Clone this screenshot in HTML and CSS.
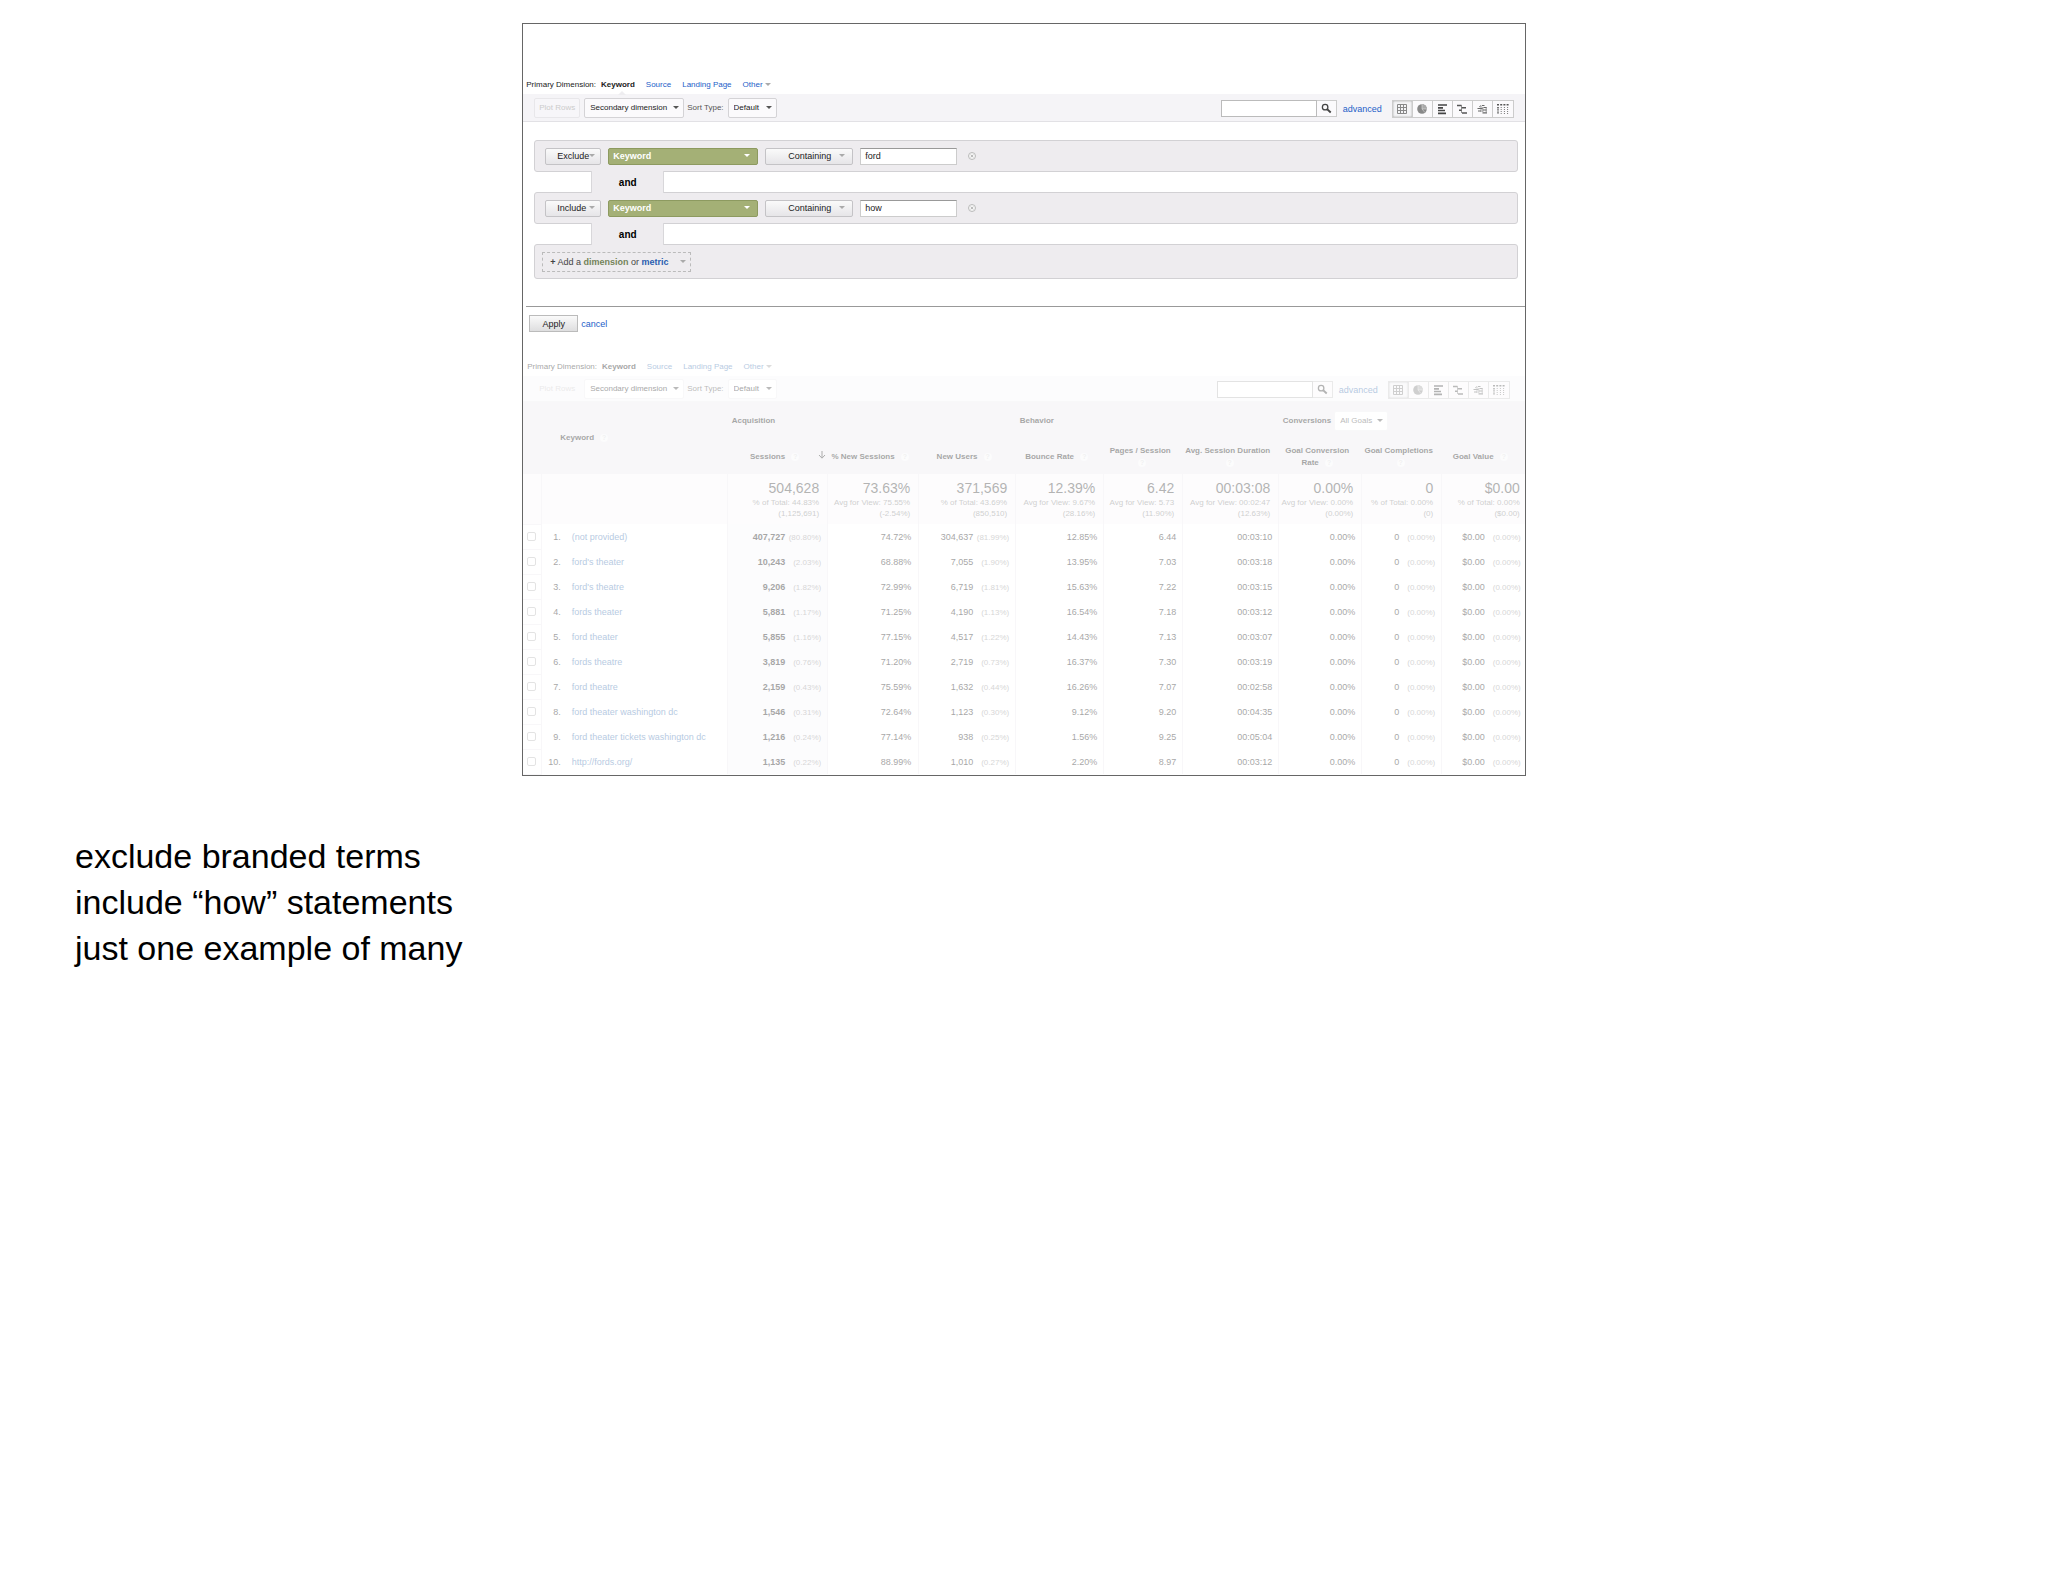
FILE: index.html
```html
<!DOCTYPE html>
<html lang="en">
<head>
  <meta charset="UTF-8">
  <meta name="viewport" content="width=device-width, initial-scale=1.0">
  <title>Keyword filters</title>
  <link rel="stylesheet" href="styles.css">
</head>
<body>

  <!-- shared icons -->
  <svg class="sprite" aria-hidden="true">
    <symbol id="i-search" viewBox="0 0 12 12"><circle cx="4.5" cy="4.5" r="3" fill="none" stroke="#444" stroke-width="1.4"/><path d="M6.8 6.8L10.6 10.4" stroke="#444" stroke-width="2"/></symbol>
    <symbol id="i-table" viewBox="0 0 12 12"><path d="M1.5 1.5h9v9h-9zM1.5 4.5h9M1.5 7.5h9M4.5 1.5v9M7.5 1.5v9" fill="none" stroke="#888"/></symbol>
    <symbol id="i-pie" viewBox="0 0 12 12"><circle cx="6" cy="6" r="4.8" fill="#888"/><path d="M6 6V1.2A4.8 4.8 0 0 1 10.8 6z" fill="#aaa"/><path d="M6 1.2V6h4.8M6 6l3 3.6" fill="none" stroke="#ddd" stroke-width=".6"/></symbol>
    <symbol id="i-bars" viewBox="0 0 12 12"><path d="M2 2h9M2 4.8h5M2 7.5h7M2 10.3h8" stroke="#444" stroke-width="1.7"/></symbol>
    <symbol id="i-compare" viewBox="0 0 12 12"><path d="M1 2.5h4.5M5.5 4.7h4.5M3 7.3h3M6 10h5" stroke="#555" stroke-width="1.5"/><path d="M5.5 2v8" stroke="#777" stroke-width=".8"/></symbol>
    <symbol id="i-cloud" viewBox="0 0 12 12"><path d="M1.5 5.5h5M2 8h3M6.5 9.8h4.5M6 2.5h2.5M7.5 4.5h3M7 7h3.5" stroke="#666" stroke-width="1.2"/><path d="M3 4l2-1.5v6.5M6.8 4v5M10.2 4v5" fill="none" stroke="#777" stroke-width=".8"/></symbol>
    <symbol id="i-pivot" viewBox="0 0 12 12"><path d="M0 1.8h12" stroke="#555" stroke-width="1.6" stroke-dasharray="2 1.2"/><path d="M1 4v7" stroke="#555" stroke-width="1.6" stroke-dasharray="1.4 .8"/><path d="M4.2 4v7M7.4 4v7M10.6 4v7" stroke="#777" stroke-dasharray="1 1"/></symbol>
    <symbol id="i-remove" viewBox="0 0 10 10"><circle cx="5" cy="5" r="3.5" fill="#f4f4f4" stroke="#bbb"/><path d="M3.7 3.7l2.6 2.6M6.3 3.7L3.7 6.3" stroke="#bbb"/></symbol>
    <symbol id="i-down" viewBox="0 0 10 10"><path d="M5 1v7M2 5l3 3.2L8 5" fill="none" stroke="#333"/></symbol>
  </svg>

  <main class="slide">
    <section class="filters">
      <nav class="dimensions">
        <span>Primary Dimension:</span>
        <strong class="current">Keyword</strong>
        <a href="#source">Source</a>
        <a href="#landing">Landing Page</a>
        <a href="#other">Other <i class="caret light"></i></a>
      </nav>

      <form class="toolbar">
        <button type="button" class="plot" disabled>Plot Rows</button>
        <span class="dropdown secondary"><select aria-label="Secondary dimension"><option>Secondary dimension</option></select></span>
        <label for="sort">Sort Type:</label>
        <span class="dropdown sort"><select id="sort"><option>Default</option></select></span>
        <div class="search">
          <input type="text" aria-label="Search">
          <button type="button" aria-label="Search"><svg><use href="#i-search"/></svg></button>
        </div>
        <a href="#advanced" class="advanced">advanced</a>
        <div class="views">
          <button type="button" class="on" aria-label="Table"><svg><use href="#i-table"/></svg></button>
          <button type="button" aria-label="Percentage"><svg><use href="#i-pie"/></svg></button>
          <button type="button" aria-label="Performance"><svg><use href="#i-bars"/></svg></button>
          <button type="button" aria-label="Comparison"><svg><use href="#i-compare"/></svg></button>
          <button type="button" aria-label="Term cloud"><svg><use href="#i-cloud"/></svg></button>
          <button type="button" aria-label="Pivot"><svg><use href="#i-pivot"/></svg></button>
        </div>
      </form>

      <form class="builder">
        <div class="rule">
          <span class="dropdown mode"><select aria-label="Mode"><option>Exclude</option></select></span>
          <span class="dropdown field"><select aria-label="Dimension"><option>Keyword</option></select></span>
          <span class="dropdown match"><select aria-label="Match"><option>Containing</option></select></span>
          <input type="text" value="ford" aria-label="Value">
          <button type="button" class="remove" aria-label="Remove"><svg><use href="#i-remove"/></svg></button>
        </div>
        <div class="joiner"><span>and</span></div>
        <div class="rule">
          <span class="dropdown mode"><select aria-label="Mode"><option>Include</option></select></span>
          <span class="dropdown field"><select aria-label="Dimension"><option>Keyword</option></select></span>
          <span class="dropdown match"><select aria-label="Match"><option>Containing</option></select></span>
          <input type="text" value="how" aria-label="Value">
          <button type="button" class="remove" aria-label="Remove"><svg><use href="#i-remove"/></svg></button>
        </div>
        <div class="joiner"><span>and</span></div>
        <div class="rule last">
          <button type="button" class="add"><span><b>+</b> Add a <b class="dim">dimension</b> or <b class="metric">metric</b></span><i class="caret light"></i></button>
        </div>
      </form>

      <div class="actions">
        <button type="button">Apply</button>
        <a href="#cancel">cancel</a>
      </div>
    </section>

    <!-- report behind the filter panel -->
    <section class="report">
      <nav class="dimensions">
        <span>Primary Dimension:</span>
        <strong>Keyword</strong>
        <a href="#source">Source</a>
        <a href="#landing">Landing Page</a>
        <a href="#other">Other <i class="caret light"></i></a>
      </nav>

      <form class="toolbar">
        <button type="button" class="plot" disabled>Plot Rows</button>
        <span class="dropdown secondary"><select aria-label="Secondary dimension"><option>Secondary dimension</option></select></span>
        <label for="sort2">Sort Type:</label>
        <span class="dropdown sort"><select id="sort2"><option>Default</option></select></span>
        <div class="search">
          <input type="text" aria-label="Search">
          <button type="button" aria-label="Search"><svg><use href="#i-search"/></svg></button>
        </div>
        <a href="#advanced" class="advanced">advanced</a>
        <div class="views">
          <button type="button" class="on" aria-label="Table"><svg><use href="#i-table"/></svg></button>
          <button type="button" aria-label="Percentage"><svg><use href="#i-pie"/></svg></button>
          <button type="button" aria-label="Performance"><svg><use href="#i-bars"/></svg></button>
          <button type="button" aria-label="Comparison"><svg><use href="#i-compare"/></svg></button>
          <button type="button" aria-label="Term cloud"><svg><use href="#i-cloud"/></svg></button>
          <button type="button" aria-label="Pivot"><svg><use href="#i-pivot"/></svg></button>
        </div>
      </form>

      <table>
        <colgroup>
          <col class="c-check"><col class="c-keyword"><col class="c-sessions"><col class="c-new"><col class="c-users">
          <col class="c-bounce"><col class="c-pages"><col class="c-duration"><col class="c-rate"><col class="c-goals"><col class="c-value">
        </colgroup>
        <thead>
          <tr class="groups">
            <th rowspan="2"></th>
            <th rowspan="2" class="keyword-head">Keyword <i class="help">?</i></th>
            <th colspan="3">Acquisition</th>
            <th colspan="3">Behavior</th>
            <th colspan="3"><div class="goals"><label for="goals">Conversions</label><span class="dropdown goal"><select id="goals"><option>All Goals</option></select></span></div></th>
          </tr>
          <tr class="metrics">
            <th class="sorted">Sessions <i class="help">?</i><svg><use href="#i-down"/></svg></th>
            <th>% New Sessions <i class="help">?</i></th>
            <th>New Users <i class="help">?</i></th>
            <th>Bounce Rate <i class="help">?</i></th>
            <th>Pages / Session<br><i class="help">?</i></th>
            <th>Avg. Session Duration<br><i class="help">?</i></th>
            <th>Goal Conversion<br>Rate <i class="help">?</i></th>
            <th>Goal Completions<br><i class="help">?</i></th>
            <th>Goal Value <i class="help">?</i></th>
          </tr>
        </thead>
        <tbody>
          <tr class="totals">
            <td></td><td></td>
            <td><b>504,628</b><span>% of Total: 44.83%<br>(1,125,691)</span></td>
            <td><b>73.63%</b><span>Avg for View: 75.55%<br>(-2.54%)</span></td>
            <td><b>371,569</b><span>% of Total: 43.69%<br>(850,510)</span></td>
            <td><b>12.39%</b><span>Avg for View: 9.67%<br>(28.16%)</span></td>
            <td><b>6.42</b><span>Avg for View: 5.73<br>(11.90%)</span></td>
            <td><b>00:03:08</b><span>Avg for View: 00:02:47<br>(12.63%)</span></td>
            <td><b>0.00%</b><span>Avg for View: 0.00%<br>(0.00%)</span></td>
            <td><b>0</b><span>% of Total: 0.00%<br>(0)</span></td>
            <td><b>$0.00</b><span>% of Total: 0.00%<br>($0.00)</span></td>
          </tr>
          <tr><td><input type="checkbox" aria-label="Row 1"></td><td><span>1.</span><a href="#1">(not provided)</a></td><td>407,727<small>(80.80%)</small></td><td>74.72%</td><td>304,637<small>(81.99%)</small></td><td>12.85%</td><td>6.44</td><td>00:03:10</td><td>0.00%</td><td>0<small>(0.00%)</small></td><td>$0.00<small>(0.00%)</small></td></tr>
          <tr><td><input type="checkbox" aria-label="Row 2"></td><td><span>2.</span><a href="#2">ford's theater</a></td><td>10,243<small>(2.03%)</small></td><td>68.88%</td><td>7,055<small>(1.90%)</small></td><td>13.95%</td><td>7.03</td><td>00:03:18</td><td>0.00%</td><td>0<small>(0.00%)</small></td><td>$0.00<small>(0.00%)</small></td></tr>
          <tr><td><input type="checkbox" aria-label="Row 3"></td><td><span>3.</span><a href="#3">ford's theatre</a></td><td>9,206<small>(1.82%)</small></td><td>72.99%</td><td>6,719<small>(1.81%)</small></td><td>15.63%</td><td>7.22</td><td>00:03:15</td><td>0.00%</td><td>0<small>(0.00%)</small></td><td>$0.00<small>(0.00%)</small></td></tr>
          <tr><td><input type="checkbox" aria-label="Row 4"></td><td><span>4.</span><a href="#4">fords theater</a></td><td>5,881<small>(1.17%)</small></td><td>71.25%</td><td>4,190<small>(1.13%)</small></td><td>16.54%</td><td>7.18</td><td>00:03:12</td><td>0.00%</td><td>0<small>(0.00%)</small></td><td>$0.00<small>(0.00%)</small></td></tr>
          <tr><td><input type="checkbox" aria-label="Row 5"></td><td><span>5.</span><a href="#5">ford theater</a></td><td>5,855<small>(1.16%)</small></td><td>77.15%</td><td>4,517<small>(1.22%)</small></td><td>14.43%</td><td>7.13</td><td>00:03:07</td><td>0.00%</td><td>0<small>(0.00%)</small></td><td>$0.00<small>(0.00%)</small></td></tr>
          <tr><td><input type="checkbox" aria-label="Row 6"></td><td><span>6.</span><a href="#6">fords theatre</a></td><td>3,819<small>(0.76%)</small></td><td>71.20%</td><td>2,719<small>(0.73%)</small></td><td>16.37%</td><td>7.30</td><td>00:03:19</td><td>0.00%</td><td>0<small>(0.00%)</small></td><td>$0.00<small>(0.00%)</small></td></tr>
          <tr><td><input type="checkbox" aria-label="Row 7"></td><td><span>7.</span><a href="#7">ford theatre</a></td><td>2,159<small>(0.43%)</small></td><td>75.59%</td><td>1,632<small>(0.44%)</small></td><td>16.26%</td><td>7.07</td><td>00:02:58</td><td>0.00%</td><td>0<small>(0.00%)</small></td><td>$0.00<small>(0.00%)</small></td></tr>
          <tr><td><input type="checkbox" aria-label="Row 8"></td><td><span>8.</span><a href="#8">ford theater washington dc</a></td><td>1,546<small>(0.31%)</small></td><td>72.64%</td><td>1,123<small>(0.30%)</small></td><td>9.12%</td><td>9.20</td><td>00:04:35</td><td>0.00%</td><td>0<small>(0.00%)</small></td><td>$0.00<small>(0.00%)</small></td></tr>
          <tr><td><input type="checkbox" aria-label="Row 9"></td><td><span>9.</span><a href="#9">ford theater tickets washington dc</a></td><td>1,216<small>(0.24%)</small></td><td>77.14%</td><td>938<small>(0.25%)</small></td><td>1.56%</td><td>9.25</td><td>00:05:04</td><td>0.00%</td><td>0<small>(0.00%)</small></td><td>$0.00<small>(0.00%)</small></td></tr>
          <tr><td><input type="checkbox" aria-label="Row 10"></td><td><span>10.</span><a href="#10">http://fords.org/</a></td><td>1,135<small>(0.22%)</small></td><td>88.99%</td><td>1,010<small>(0.27%)</small></td><td>2.20%</td><td>8.97</td><td>00:03:12</td><td>0.00%</td><td>0<small>(0.00%)</small></td><td>$0.00<small>(0.00%)</small></td></tr>
        </tbody>
      </table>
    </section>
  </main>

  <!-- speaker notes -->
  <section class="notes">
    <p>exclude branded terms</p>
    <p>include “how” statements</p>
    <p>just one example of many</p>
  </section>

</body>
</html>
```
FILE: styles.css
```css
* { margin: 0; padding: 0; box-sizing: border-box; }

body {
  font-family: "Liberation Sans", Arial, sans-serif;
  background: #fff;
  color: #000;
}

a { color: #2460c8; text-decoration: none; }

button, input, select { font: inherit; color: inherit; }

svg { display: block; }

.sprite { display: none; }

.slide {
  width: 49%;
  margin: 23px auto 0;
  border: 1px solid #666;
  font-size: 8px;
  color: #222;
  overflow: hidden;
}

.filters { padding-top: 50px; }

/* dimension links */
.dimensions {
  display: flex;
  align-items: center;
  height: 20px;
  padding-left: 3px;
}

.dimensions strong { position: relative; margin-left: 5px; }
.dimensions a { margin-left: 11px; }

.current::after {
  content: "";
  position: absolute;
  left: 50%;
  top: 11px;
  border: 4px solid transparent;
  border-top: 0;
  border-bottom-color: #eeedf0;
}

.caret {
  display: inline-block;
  border: 3px solid transparent;
  border-top-color: #555;
  border-bottom: 0;
  vertical-align: middle;
}

.caret.light { border-top-color: #aaa; }

/* drop-downs */
.dropdown { position: relative; display: block; }

.dropdown::after {
  content: "";
  position: absolute;
  right: 5px;
  top: 50%;
  margin-top: -2px;
  border: 3px solid transparent;
  border-top-color: #555;
  border-bottom: 0;
  pointer-events: none;
}

.dropdown select {
  display: block;
  appearance: none;
  width: 100%;
  height: 100%;
  padding-left: 5px;
  border: 1px solid #d4d3d6;
  border-radius: 2px;
  background: #fbfafc;
}

/* toolbar */
.toolbar {
  display: flex;
  align-items: center;
  height: 28px;
  padding: 0 11px;
  background: #f5f4f7;
  border-bottom: 1px solid #e2e1e5;
}

.plot {
  width: 46px;
  height: 20px;
  border: 1px solid #e8e7ea;
  border-radius: 2px;
  background: #f7f6f9;
  color: #ccc;
}

.secondary { width: 100px; height: 20px; margin: 0 3px 0 4px; }
.toolbar label { color: #555; }
.sort { width: 49px; height: 20px; margin-left: 4px; }

.search { display: flex; margin: 2px 0 0 auto; height: 17px; }
.search input { width: 96px; border: 1px solid #bbb; background: #fff; padding: 0 4px; }

.search button {
  width: 20px;
  border: 1px solid #ccc;
  border-left: 0;
  background: #fbfafc;
}

.search svg { width: 11px; height: 11px; margin: 0 auto; }

.advanced { margin: 2px 10px 0 6px; font-size: 9px; }

.views { display: flex; height: 18px; margin-top: 2px; border: 1px solid #ccc; }

.views button {
  width: 20px;
  border: 0;
  border-right: 1px solid #ccc;
  background: #fbfafc;
}

.views button:last-child { border-right: 0; }
.views .on { background: #f4f4f6; box-shadow: inset 0 0 2px #999; }
.views svg { width: 12px; height: 12px; margin: 0 auto; }

/* filter builder */
.builder { padding: 18px 7px 27px 11px; font-size: 9px; }

.rule {
  display: flex;
  align-items: center;
  height: 32px;
  padding-left: 10px;
  border: 1px solid #d2d1d4;
  border-radius: 3px;
  background: #eeecef;
}

.rule.last { height: 35px; padding-left: 7px; }

.rule select {
  border-color: #c4c3c6;
  background: linear-gradient(#fafafa, #e6e5e8);
}

.rule .dropdown { height: 17px; }
.rule .mode { width: 56px; }
.rule .mode select { padding-left: 11px; }
.rule .field { width: 150px; margin: 0 7px; }

.rule .field select {
  padding-left: 4px;
  border-color: #8d9a60;
  background: #a4b076;
  color: #fff;
  font-weight: bold;
}

.rule .field::after { right: 8px; border-top-color: #fff; }
.rule .match { width: 88px; }
.rule .match select { padding-left: 22px; }
.rule .mode::after, .rule .match::after { border-top-color: #aaa; }
.rule .mode::after { right: 6px; }
.rule .match::after { right: 8px; }

.rule input {
  width: 97px;
  height: 17px;
  margin-left: 7px;
  padding: 0 4px;
  border: 1px solid #ccc;
  border-top-color: #999;
  background: #fff;
}

.remove { margin-left: 10px; border: 0; background: none; }
.remove svg { width: 10px; height: 10px; }

.joiner {
  display: flex;
  height: 20px;
  padding-left: 57px;
}

.joiner span {
  position: relative;
  width: 73px;
  margin: -1px 0;
  border: solid #d8d7da;
  border-width: 0 1px;
  background: #eeecef;
  color: #000;
  font-size: 10px;
  font-weight: bold;
  line-height: 24px;
  text-align: center;
}

.add {
  display: flex;
  align-items: center;
  gap: 11px;
  height: 20px;
  padding: 0 4px 0 7px;
  border: 1px dashed #bbb;
  background: none;
  color: #444;
}

.dim { color: #74835a; }
.metric { color: #2a5db0; }

.actions {
  display: flex;
  align-items: center;
  gap: 3px;
  margin-left: 3px;
  padding: 8px 0 24px 3px;
  border-top: 1px solid #999;
  font-size: 9px;
}

.actions button {
  width: 49px;
  height: 17px;
  border: 1px solid #bbb;
  background: linear-gradient(#fafafa, #dededf);
}

/* faded report */
.report { opacity: .4; }
.report .dimensions { padding-left: 4px; }
.report .toolbar { height: 26px; padding-right: 15px; background: #faf9fc; border-color: #f0eff2; }
.report .plot { border-color: transparent; background: none; }
.report .dropdown select { border-color: #f0eff2; background: #fff; }
.report a { color: #4b7bb5; }

table {
  width: 100%;
  table-layout: fixed;
  border-collapse: collapse;
}

.c-check { width: 18px; }
.c-sessions { width: 100px; }
.c-new { width: 91px; }
.c-users { width: 97px; }
.c-bounce { width: 88px; }
.c-pages { width: 79px; }
.c-duration { width: 96px; }
.c-rate { width: 83px; }
.c-goals { width: 80px; }
.c-value { width: 83px; }

thead { background: #eeedf1; }
th { line-height: 12px; white-space: nowrap; }
.groups { height: 38px; }
.groups th { padding-left: 4px; text-align: left; }
.groups .keyword-head { padding-left: 19px; }
.metrics { height: 34px; }
.metrics th { padding-right: 6px; }
.goals { display: flex; align-items: center; gap: 3px; }
.goal { width: 54px; height: 20px; }
.goal select { color: #555; font-weight: normal; }

.help {
  display: inline-block;
  width: 8px;
  height: 8px;
  margin-left: 4px;
  border-radius: 50%;
  background: #f8f8fa;
  color: #ddd;
  font-size: 7px;
  line-height: 8px;
  font-style: normal;
  text-align: center;
}

.sorted { position: relative; }
.sorted svg { position: absolute; right: 1px; top: 10px; width: 10px; height: 10px; }

td {
  height: 25px;
  padding-right: 6px;
  border-left: 1px solid #eeedf1;
  font-size: 9px;
  text-align: right;
  white-space: nowrap;
}

td:first-child { padding: 0; border-left: 0; border-bottom: 1px solid #eeedf1; text-align: center; }
td:nth-child(2) { text-align: left; }
td:nth-child(2) span { display: inline-block; width: 19px; margin-right: 11px; text-align: right; }
td:nth-child(3) { background: #f9f8fc; font-weight: bold; }
td:nth-child(4) { padding-right: 7px; }
td:last-child { padding-right: 4px; }

td small {
  display: inline-block;
  width: 36px;
  color: #999;
  font-size: 8px;
  font-weight: normal;
}

.totals { background: #fbfafc; }
.totals td { height: 50px; padding-right: 8px; line-height: 10px; background: none; font-weight: normal; }
.totals td:last-child { padding-right: 5px; }
.totals b { display: block; font-size: 14px; line-height: 18px; font-weight: normal; color: #444; }
.totals td span { color: #888; font-size: 8px; }

input[type="checkbox"] {
  display: block;
  appearance: none;
  width: 9px;
  height: 9px;
  margin: 0 auto;
  border: 1px solid #bbb;
  border-radius: 2px;
  background: #fff;
}

/* notes under the slide */
.notes {
  padding: 57px 75px;
  font-size: 34px;
  line-height: 46px;
}
```
